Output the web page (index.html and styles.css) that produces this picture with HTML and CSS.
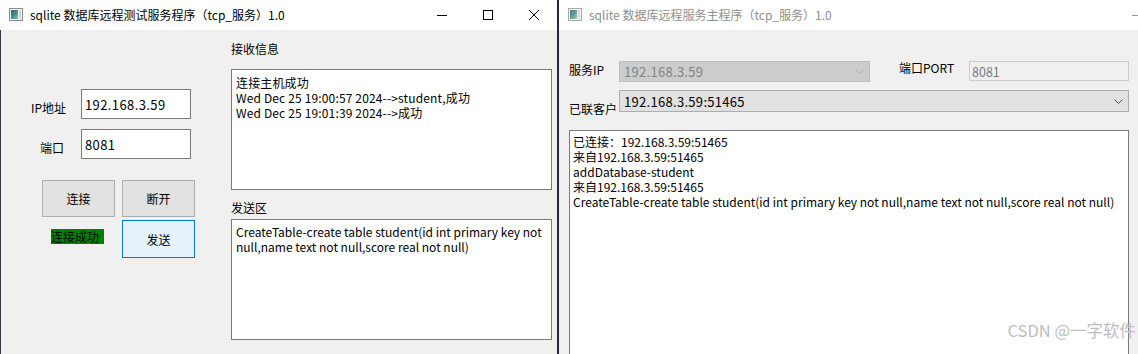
FILE: index.html
```html
<!DOCTYPE html>
<html lang="zh-CN">
<head>
<meta charset="utf-8">
<title>sqlite tcp</title>
<link rel="stylesheet" href="styles.css">
</head>
<body>
<div class="desk">
  <section class="win win-left">
    <header class="titlebar">
      <svg class="appicon" width="14" height="13" viewBox="0 0 14 13">
        <defs>
          <linearGradient id="g1" x1="0" y1="0" x2="1" y2="1">
            <stop offset="0" stop-color="#2f5d86"/>
            <stop offset="0.6" stop-color="#4d9a8a"/>
            <stop offset="1" stop-color="#8fc9a0"/>
          </linearGradient>
        </defs>
        <rect x="0.5" y="0.5" width="13" height="12" fill="#f4f4f4" stroke="#8a8a8a"/>
        <rect x="2" y="2" width="7" height="9" fill="url(#g1)"/>
        <rect x="10" y="2" width="2" height="9" fill="#c9d6e3"/>
      </svg>
      <span class="title">sqlite 数据库远程测试服务程序（tcp_服务）1.0</span>
      <div class="caption">
        <span class="cap-btn"><svg width="10" height="10" viewBox="0 0 10 10"><path d="M0 5.5H10" stroke="#000" stroke-width="1"/></svg></span>
        <span class="cap-btn"><svg width="10" height="10" viewBox="0 0 10 10"><rect x="0.5" y="0.5" width="9" height="9" fill="none" stroke="#000" stroke-width="1"/></svg></span>
        <span class="cap-btn"><svg width="10" height="10" viewBox="0 0 10 10"><path d="M0 0L10 10M10 0L0 10" stroke="#000" stroke-width="1"/></svg></span>
      </div>
    </header>
    <div class="client client-left">
      <div class="lpanel">
        <div class="field">
          <span class="flabel flabel-ip">IP地址</span>
          <div class="input">192.168.3.59</div>
        </div>
        <div class="field">
          <span class="flabel flabel-port">端口</span>
          <div class="input">8081</div>
        </div>
        <div class="btngrid">
          <button class="btn">连接</button>
          <button class="btn">断开</button>
          <div class="status"><span class="ok">连接成功</span></div>
          <button class="btn btn-focus">发送</button>
        </div>
      </div>
      <div class="rcol">
        <div class="glabel glabel-recv">接收信息</div>
        <div class="textbox recv">
          <div>连接主机成功</div>
          <div>Wed Dec 25 19:00:57 2024--&gt;student,成功</div>
          <div>Wed Dec 25 19:01:39 2024--&gt;成功</div>
        </div>
        <div class="glabel glabel-send">发送区</div>
        <div class="textbox send">CreateTable-create table student(id int primary key not null,name text not null,score real not null)</div>
      </div>
    </div>
  </section>
  <div class="divider"></div>
  <section class="win win-right">
    <header class="titlebar titlebar-inactive">
      <svg class="appicon faded" width="14" height="13" viewBox="0 0 14 13">
        <defs>
          <linearGradient id="g2" x1="0" y1="0" x2="1" y2="1">
            <stop offset="0" stop-color="#2f5d86"/>
            <stop offset="0.6" stop-color="#4d9a8a"/>
            <stop offset="1" stop-color="#8fc9a0"/>
          </linearGradient>
        </defs>
        <rect x="0.5" y="0.5" width="13" height="12" fill="#f4f4f4" stroke="#9a9a9a"/>
        <rect x="2" y="2" width="7" height="9" fill="url(#g2)"/>
        <rect x="10" y="2" width="2" height="9" fill="#c9d6e3"/>
      </svg>
      <span class="title">sqlite 数据库远程服务主程序（tcp_服务）1.0</span>
      <span class="cap-peek"></span>
    </header>
    <div class="client client-right">
      <div class="srow srow1">
        <span class="rlabel rlabel-ip">服务IP</span>
        <div class="combo combo-disabled combo-ip">
          <span>192.168.3.59</span>
          <svg class="chev" width="9" height="5" viewBox="0 0 9 5"><path d="M0.5 0.5L4.5 4.5L8.5 0.5" fill="none" stroke="#b0b0b0"/></svg>
        </div>
        <span class="rlabel rlabel-port">端口PORT</span>
        <div class="pinput">8081</div>
      </div>
      <div class="srow srow2">
        <span class="rlabel rlabel-cli">已联客户</span>
        <div class="combo combo-cli">
          <span>192.168.3.59:51465</span>
          <svg class="chev" width="9" height="5" viewBox="0 0 9 5"><path d="M0.5 0.5L4.5 4.5L8.5 0.5" fill="none" stroke="#555"/></svg>
        </div>
      </div>
      <div class="textbox rbox">
        <div>已连接：192.168.3.59:51465</div>
        <div>来自192.168.3.59:51465</div>
        <div>addDatabase-student</div>
        <div>来自192.168.3.59:51465</div>
        <div>CreateTable-create table student(id int primary key not null,name text not null,score real not null)</div>
      </div>
    </div>
    <div class="watermark">CSDN @一字软件</div>
  </section>
</div>
</body>
</html>
```
FILE: styles.css
```css
* { box-sizing: border-box; }
html, body { margin: 0; padding: 0; }
body {
  width: 1138px;
  height: 354px;
  overflow: hidden;
  background: #f0f0f0;
  font-family: "Noto Sans CJK SC", "Noto Sans", sans-serif;
  font-size: 12px;
  color: #000;
}
.desk {
  display: flex;
  width: 1138px;
  height: 354px;
}
.win {
  display: flex;
  flex-direction: column;
  height: 354px;
  overflow: hidden;
}
.win-left { width: 557px; }
.win-right { width: 579px; position: relative; }
.divider {
  width: 2px;
  height: 354px;
  background: #1f2b3b;
}

/* title bars */
.titlebar {
  height: 30px;
  flex: none;
  background: #fff;
  display: flex;
  align-items: center;
  padding-left: 9px;
}
.appicon { flex: none; margin-right: 7px; margin-top: -1px; }
.appicon.faded { opacity: 0.85; }
.title {
  font-size: 12px;
  line-height: 16px;
  white-space: nowrap;
  color: #000;
}
.titlebar-inactive .title { color: #8e8e8e; }
.caption {
  margin-left: auto;
  display: flex;
  height: 30px;
}
.cap-btn {
  width: 46px;
  height: 30px;
  display: flex;
  align-items: center;
  justify-content: center;
}
.cap-peek {
  margin-left: auto;
  width: 6px;
  height: 1px;
  background: #9a9a9a;
  margin-top: 1px;
}

/* left client */
.client {
  flex: 1;
  background: #f0f0f0;
}
.client-left {
  display: flex;
  box-shadow: inset 1px 0 #2b3a4f;
}
.lpanel {
  width: 231px;
  flex: none;
  padding-top: 59px;
}
.field {
  display: flex;
  height: 30px;
}
.field + .field { margin-top: 10px; }
.flabel {
  width: 81px;
  flex: none;
  line-height: 16px;
  padding-top: 11px;
}
.flabel-ip { padding-left: 31px; }
.flabel-port { padding-left: 40px; }
.input {
  width: 110px;
  height: 30px;
  background: #fff;
  border: 1px solid #7a7a7a;
  padding-left: 3px;
  display: flex;
  align-items: center;
  font-size: 13px;
  letter-spacing: 0.4px;
}
.btngrid {
  margin-top: 21px;
  margin-left: 42px;
  display: grid;
  grid-template-columns: 73px 73px;
  grid-template-rows: 37px 38px;
  column-gap: 7px;
  row-gap: 3px;
}
.btn {
  margin: 0;
  padding: 0;
  font-family: inherit;
  font-size: 12px;
  color: #000;
  background: #e1e1e1;
  border: 1px solid #adadad;
  border-radius: 0;
}
.btn-focus {
  background: #e5f1fb;
  border-color: #0078d7;
}
.status {
  padding-top: 9px;
  padding-left: 9px;
}
.ok {
  display: block;
  width: 53px;
  height: 15px;
  line-height: 15px;
  background: #008000;
  color: #000;
  white-space: nowrap;
}

.rcol {
  width: 321px;
  flex: none;
  padding-top: 11px;
}
.glabel {
  line-height: 16px;
  height: 16px;
}
.glabel-recv { margin-bottom: 12px; }
.glabel-send { margin-top: 10px; margin-bottom: 3px; }
.textbox {
  background: #fff;
  border: 1px solid #7a7a7a;
  line-height: 15px;
  font-size: 12px;
}
.recv {
  height: 121px;
  padding: 5px 4px 0 4px;
  letter-spacing: 0.15px;
}
.send {
  height: 121px;
  padding: 4px 4px 0 4px;
}

/* right client */
.client-right {
  padding: 31px 0 0 10px;
}
.srow { display: flex; }
.srow1 { height: 21px; }
.srow2 { height: 22px; margin-top: 8px; }
.rlabel {
  flex: none;
  line-height: 16px;
  white-space: nowrap;
}
.rlabel-ip { width: 50px; padding-top: 1px; }
.rlabel-cli { width: 50px; padding-top: 11px; }
.rlabel-port { width: 70px; margin-left: 29px; margin-top: -1px; }
.combo {
  flex: none;
  display: flex;
  align-items: center;
  padding-left: 4px;
  padding-right: 5px;
  font-size: 13px;
  letter-spacing: 0.3px;
}
.combo .chev { margin-left: auto; }
.combo-ip {
  width: 251px;
  height: 21px;
}
.combo-disabled {
  background: #cccccc;
  border: 1px solid #bfbfbf;
  color: #838383;
}
.combo-cli {
  width: 510px;
  height: 22px;
  background: #e1e1e1;
  border: 1px solid #adadad;
}
.pinput {
  width: 160px;
  height: 20px;
  background: #f0f0f0;
  border: 1px solid #cccccc;
  color: #7a7a7a;
  padding-left: 2px;
  display: flex;
  align-items: center;
  font-size: 12.5px;
}
.rbox {
  margin-top: 18px;
  width: 560px;
  height: 240px;
  padding: 3px 3px 0 3px;
  white-space: nowrap;
}
.watermark {
  position: absolute;
  right: 2px;
  bottom: 15px;
  font-size: 16.5px;
  line-height: 18px;
  color: #bdbdbd;
  text-shadow: 0 0 1px #fff;
  white-space: nowrap;
}
```
